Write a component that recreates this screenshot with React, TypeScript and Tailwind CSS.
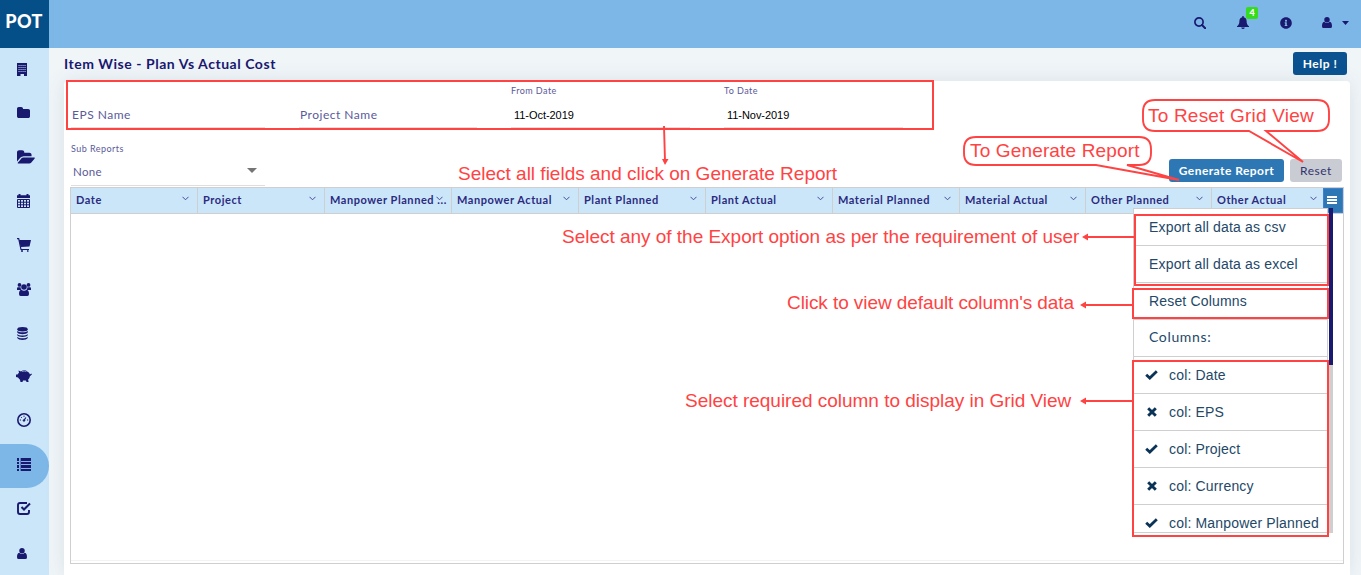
import React from 'react';
import { FaInfoCircle } from 'react-icons/fa';

const CalendarIcon = () => (
  <svg width="13" height="14" viewBox="0 0 13 14" fill="none" stroke="#191970">
    <path d="M0 4V1.200h1.500V0h2v1.200h6V0h2v1.200H13V4z" fill="#191970" stroke="none" />
    <path d="M.5 5.500h12v8H.5zM.5 8.200h12M.5 10.800h12M3.500 5v8.500M6.500 5v8.500M9.500 5v8.500" />
  </svg>
);

const BuildingIcon = () => (
  <svg className="mt-px" width="10" height="13" viewBox="0 0 10 13">
    <path d="M0 0h10v13H7v-2H3.500v2H0z" fill="#191970" />
    <path d="M1.500 2.500h7.500M1.500 4.500h7.500M1.500 6.500h7.500M1.500 8.500h7.500" stroke="#b9cdf0" strokeDasharray="1.100 .9" strokeWidth="1" />
  </svg>
);

const FolderIcon = () => (
  <svg width="14" height="14" viewBox="64 0 1792 1792" fill="#191970">
    <path d="M1728 608v704q0 92-66 158t-158 66h-1216q-92 0-158-66t-66-158v-960q0-92 66-158t158-66h320q92 0 158 66t66 158v32h672q92 0 158 66t66 158z" />
  </svg>
);

const FolderOpenIcon = () => (
  <svg className="mt-px" width="18" height="17" viewBox="0 0 1900 1792" fill="#191970">
    <path d="M1879 952q0 31-31 66l-336 396q-43 51-120.500 86.500t-143.500 35.500h-1088q-34 0-60.500-13t-26.500-43q0-31 31-66l336-396q43-51 120.500-86.500t143.500-35.500h1088q34 0 60.500 13t26.500 43zm-343-344v160h-832q-94 0-197 47.500t-164 119.500l-337 396-5 6q0-4-.5-12.500t-.5-12.500v-960q0-92 66-158t158-66h320q92 0 158 66t66 158v32h544q92 0 158 66t66 158z" />
  </svg>
);

const CartIcon = () => (
  <svg width="14" height="14" viewBox="0 0 14 14" fill="none" stroke="#191970">
    <path d="M2 2h12l-1.500 6.500L3.700 9z" fill="#191970" stroke="none" />
    <path d="M0 .700h1.700L4 11.500h8" strokeWidth="1.200" />
    <path d="M4 13h2M10 13h1.500" strokeWidth="1.600" />
  </svg>
);

const UsersIcon = () => (
  <svg className="mt-px" width="14" height="13" viewBox="0 0 14 13" fill="#191970">
    <circle cx="2.500" cy="1.900" r="1.900" />
    <circle cx="11.500" cy="1.900" r="1.900" />
    <circle cx="7" cy="4" r="2.800" />
    <path d="M0 7V5.500Q0 4 1.200 4.200H3.600Q3.600 6 4.500 7zM14 7V5.500Q14 4 12.800 4.200H10.400Q10.400 6 9.500 7z" />
    <path d="M4.300 6.700Q7 9 9.700 6.700C11.500 7 12 9 12 11Q12 13 10.400 13H3.600Q2 13 2 11C2 9 2.500 7 4.300 6.700z" />
  </svg>
);

const DatabaseIcon = () => (
  <svg className="mt-px" width="11" height="13" viewBox="0 0 12 13" fill="#191970" preserveAspectRatio="none">
    <ellipse cx="6" cy="2.200" rx="5.700" ry="2.200" />
    <path d="M.3 3.800C2 5.800 10 5.800 11.700 3.800V5.500C10.500 7.700 1.500 7.700.3 5.500zM.3 6.900C2 8.900 10 8.900 11.700 6.900V8.300C10.500 10.500 1.500 10.500.3 8.300zM.3 9.700C2 11.700 10 11.700 11.700 9.700V11C10.500 13.500 1.500 13.500.3 11z" />
  </svg>
);

const PiggyIcon = () => (
  <svg width="16" height="13" viewBox="0 0 16 13" fill="#191970">
    <path d="M5 1.600C7-.2 10-.2 11.500 1.800c1.500.7 2.200 1.800 2.400 2.800L15.300 3.500l.6 1-2 1.700c-.2 1.600-1 2.600-1.800 3.200L12.600 12h-2l-.8-1.500H7L6.500 12h-2L4 9.700C3 9 2.500 8.200 2 7.500L0 7V4.500h1.500C2 3.500 2.500 3 3 2.700L2.500.6z" />
    <path d="M6 1.500Q8.200.6 10.500 1.600" fill="none" stroke="#cbe6f9" strokeWidth=".6" />
  </svg>
);

const GaugeIcon = () => (
  <svg className="-mt-px" width="14" height="14" viewBox="0 0 14 14" fill="none" stroke="#191970">
    <circle cx="7" cy="7" r="6.200" strokeWidth="1.600" />
    <path d="M7 7.500 8.800 4.500" strokeWidth="1.200" />
    <circle cx="7" cy="7.500" r=".8" fill="#191970" />
    <path d="M2.800 7h1.200M10 7h1.200M4 4l.8.800M7 2.600v1.200" strokeWidth="1" />
  </svg>
);

const ListIcon = () => (
  <svg width="14" height="13" viewBox="0 0 14 13" fill="#191970">
    <path d="M0 0h2v3H0zM0 4h2v2H0zM0 7h2v3H0zM0 11h2v2H0zM4 0H14v3H4zM4 4H14v2H4zM4 7H14v3H4zM4 11H14v2H4z" />
    <path d="M3 0h1v13H3z" opacity=".35" />
  </svg>
);

const CheckSquareIcon = () => (
  <svg width="14" height="13" viewBox="0 0 14 13" fill="none" stroke="#191970">
    <path d="M10 1H3Q1 1 1 3v7q0 2 2 2h7q2 0 2-2V8" strokeWidth="1.900" />
    <path d="M4.500 5 7 7.500l6-6" strokeWidth="2.100" />
  </svg>
);

const PersonIcon = ({ className = '' }: { className?: string }) => (
  <svg className={className} width="10" height="11" viewBox="0 0 11 12" fill="#191970" preserveAspectRatio="none">
    <circle cx="5.500" cy="3" r="3" />
    <path d="M2.500 5.200Q5.500 8 8.500 5.200C10.500 5.500 11 8 11 10q0 2-1.800 2H1.800Q0 12 0 10C0 8 .5 5.500 2.500 5.200z" />
  </svg>
);

const SearchIcon = () => (
  <svg width="12" height="12" viewBox="0 0 12 12" fill="none" stroke="#191970">
    <circle cx="5" cy="5" r="4.100" strokeWidth="1.700" />
    <path d="M8 8l3.200 3.200" strokeWidth="2" strokeLinecap="round" />
  </svg>
);

const BellIcon = () => (
  <svg width="12" height="13" viewBox="0 0 12 13" fill="#191970">
    <path d="M5.300 0h1.400v1.200C8.700 1.600 9.600 3 9.600 5c0 3 .9 4.200 2.400 5.300v.7H0v-.7C1.500 9.200 2.400 8 2.400 5c0-2 .9-3.400 2.900-3.800zM4.200 11.400h3.600Q7.500 13 6 13T4.200 11.400z" />
  </svg>
);

const CheckIcon = () => (
  <svg width="13" height="10" viewBox="0 0 13 10" fill="none" stroke="#0b3358" strokeWidth="2.800">
    <path d="M1.200 4.700 4.800 8.100 11.800 1.300" />
  </svg>
);

const CrossIcon = () => (
  <svg width="10" height="10" viewBox="0 0 10 10" fill="none" stroke="#0b3358" strokeWidth="2.900">
    <path d="M1.200 1.200l7.600 7.600M8.800 1.200 1.200 8.800" />
  </svg>
);

const navItems = [
  <BuildingIcon />, <FolderIcon />, <FolderOpenIcon />, <CalendarIcon />,
  <CartIcon />, <UsersIcon />, <DatabaseIcon />, <PiggyIcon />,
  <GaugeIcon />, <ListIcon />, <CheckSquareIcon />, <PersonIcon className="mt-px" />,
];

const columns = [
  { name: 'Date', width: 'w-[127px]' },
  { name: 'Project', width: 'w-[127px]' },
  { name: 'Manpower Planned ...', width: 'w-[127px]' },
  { name: 'Manpower Actual', width: 'w-[127px]' },
  { name: 'Plant Planned', width: 'w-[127px]' },
  { name: 'Plant Actual', width: 'w-[127px]' },
  { name: 'Material Planned', width: 'w-[127px]' },
  { name: 'Material Actual', width: 'w-[126px]' },
  { name: 'Other Planned', width: 'w-[126px]' },
  { name: 'Other Actual', width: 'w-[111px]' },
];

const menuColumns = [
  { name: 'Date', on: true },
  { name: 'EPS', on: false },
  { name: 'Project', on: true },
  { name: 'Currency', on: false },
  { name: 'Manpower Planned', on: true },
];

const Chevron = () => (
  <svg className="shrink-0" width="7" height="5" viewBox="0 0 7 5" fill="none" stroke="#4a4a9a">
    <path d="M.5.800 3.500 3.800 6.500.800" />
  </svg>
);

function Header() {
  return (
    <header className="flex h-12 bg-[#7db7e8]">
      <div className="flex w-[49px] justify-center bg-[#044f88] pt-[8px] pr-px text-[18px] leading-[27px] font-black tracking-[0.3px] text-white">POT</div>
      <div className="flex flex-1 items-center justify-end pr-[12px] pb-[3px] text-[#191970]">
        <div className="mr-[31px]"><SearchIcon /></div>
        <div className="relative mr-[31px]">
          <BellIcon />
          <span className="absolute -top-[9px] left-[9px] flex h-[12px] w-[12px] items-center justify-center rounded-[2px] bg-[#35dc1c] pb-px text-[9px] font-black text-white">4</span>
        </div>
        <FaInfoCircle size={12} className="mr-[30px]" />
        <PersonIcon className="mr-[10px]" />
        <svg width="7" height="4" viewBox="0 0 7 4" fill="#191970"><path d="M0 0h7L3.500 4z" /></svg>
      </div>
    </header>
  );
}

function Sidebar() {
  return (
    <nav className="flex w-[49px] shrink-0 flex-col bg-[#cbe6f9] text-[#191970]">
      {navItems.map((icon, i) => (
        <div key={i} className={`flex h-11 shrink-0 items-center pb-[3px] ${i === 9 ? 'rounded-r-[22px] bg-[#7db7e8]' : ''} ${i === 7 ? 'pl-[16px]' : 'pl-[17px]'}`}>
          {icon}
        </div>
      ))}
    </nav>
  );
}

function Filters() {
  return (
    <div className="flex gap-[34px] pl-[7px] text-[12px] tracking-[0.500px] text-[#5a5a9a]">
      <div className="flex h-[47px] w-[194px] items-end border-b border-[#dedede] pb-[4px] pl-px leading-4">EPS Name</div>
      <div className="flex h-[47px] w-[178px] items-end border-b border-[#dedede] pb-[4px] pl-px leading-4">Project Name</div>
      {[['From Date', '11-Oct-2019'], ['To Date', '11-Nov-2019']].map(([label, value]) => (
        <div key={label} className="flex h-[47px] w-[179px] flex-col border-b border-[#dedede] pt-[4px]">
          <span className="text-[9px] leading-[12px] tracking-[0.45px]">{label}</span>
          <span className="mt-[11px] pl-[3px] font-['Liberation_Sans',sans-serif] text-[11px] leading-[14px] tracking-[-0.05px] text-black">{value}</span>
        </div>
      ))}
    </div>
  );
}

function Grid() {
  return (
    <div className="ml-[6px] flex h-[377px] w-[1274px] flex-col border border-[#cfcfcf]">
      <div className="flex h-[26px] border-b border-[#cfcfcf] bg-[#cbe6f9]">
        {columns.map((c, i) => (
          <div key={c.name} className={`relative flex shrink-0 items-center ${i < 9 ? 'border-r border-[#cfcfcf]' : ''} pl-[5px] text-[11px] font-bold tracking-[0.55px] text-[#2b2b80] ${c.width}`}>
            <span className="whitespace-nowrap">{c.name}</span>
            <span className={`absolute top-[8px] ${i === 9 ? 'right-[6px]' : 'right-[8px]'}`}><Chevron /></span>
          </div>
        ))}
        <button className="flex h-[25px] w-[20px] items-center justify-center bg-[#2d78b4] outline-1 -outline-offset-1 outline-[#3b82d6]">
          <svg className="mr-[2px] mb-px" width="10" height="8" viewBox="0 0 10 8" fill="#fff"><path d="M0 0h10v2H0zM0 3h10v2H0zM0 6h10v2H0z" /></svg>
        </button>
      </div>
      <div className="mt-auto mb-[2px] h-px bg-[#f3f3f3]" />
    </div>
  );
}

function ColumnMenu() {
  const row = 'flex h-[37px] shrink-0 items-center border-b border-[#cfcfcf] text-[14px] text-[#234868]';
  return (
    <div className="absolute top-[208px] left-[1133px] flex h-[325px] w-[200px] font-['Liberation_Sans',sans-serif]">
      <div className="flex w-[195px] flex-col overflow-hidden border border-[#cfcfcf] bg-white tracking-[0.17px]">
        <div className={`${row} pl-[15px]`}>Export all data as csv</div>
        <div className={`${row} pl-[15px]`}>Export all data as excel</div>
        <div className={`${row} pl-[15px]`}>Reset Columns</div>
        <div className={`${row} pb-[3px] pl-[15px] font-['Lato',sans-serif] tracking-[0.65px]`}>Columns:</div>
        {menuColumns.map((c) => (
          <div key={c.name} className={`${row} pl-[11px]`}>
            <span className={`flex w-[24px] items-center ${c.on ? '' : 'pl-[2px]'}`}>{c.on ? <CheckIcon /> : <CrossIcon />}</span>
            <span className="whitespace-nowrap">col: {c.name}</span>
          </div>
        ))}
      </div>
      <div className="ml-[1px] w-[4px] bg-[#cfcfcf]"><div className="h-[157px] bg-[#191970]" /></div>
    </div>
  );
}

function Annotations() {
  const note = 'absolute whitespace-nowrap leading-[22px]';
  return (
    <div className="pointer-events-none absolute inset-0 font-['Liberation_Sans',sans-serif] text-[19px] text-[#ff4343]">
      <svg className="absolute inset-0" width="1361" height="575" fill="none" stroke="#ff4343" strokeWidth="2">
        <rect x="67" y="81" width="866" height="48" />
        <rect x="1135" y="215" width="193" height="70" />
        <rect x="1133" y="289" width="195" height="29" />
        <rect x="1133" y="361" width="195" height="175" />
        <path d="M664 126 665 161M1134 237H1087M1132 305H1084M1132 401H1084" strokeWidth="1.900" />
        <path d="M662 159h6.500l-3.500 6zM1088 233.500v7l-6-3.500zM1086 301.500v7l-6-3.500zM1086 397.500v7l-6-3.500z" fill="#ff4343" stroke="none" />
        <path d="M976 137H1139Q1151 137 1151 149V153Q1151 165 1139 165H1127L1179 180 1096 165H976Q964 165 964 153V149Q964 137 976 137z" fill="#fff" strokeWidth="1.900" />
        <path d="M1155 100H1317Q1329 100 1329 112V119Q1329 131 1317 131H1266L1303 162 1249 131H1155Q1143 131 1143 119V112Q1143 100 1155 100z" fill="#fff" strokeWidth="1.900" />
      </svg>
      <span className={`${note} top-[163px] left-[458px]`}>Select all fields and click on Generate Report</span>
      <span className={`${note} top-[226px] left-[562px] tracking-[-0.02px]`}>Select any of the Export option as per the requirement of user</span>
      <span className={`${note} top-[292px] left-[787px] tracking-[-0.08px]`}>Click to view default column's data</span>
      <span className={`${note} top-[390px] left-[685px] tracking-[-0.02px]`}>Select required column to display in Grid View</span>
      <span className={`${note} top-[140px] left-[970px] tracking-[0.15px]`}>To Generate Report</span>
      <span className={`${note} top-[105px] left-[1148px] tracking-[0.2px]`}>To Reset Grid View</span>
    </div>
  );
}

export default function App() {
  return (
    <div className="relative flex h-[575px] w-[1361px] flex-col overflow-hidden bg-[#f0f5f8] font-['Lato',sans-serif]">
      <Header />
      <div className="flex min-h-0 flex-1">
        <Sidebar />
        <main className="flex flex-1 flex-col pr-[11px] pl-[15px]">
          <div className="flex h-[33px] shrink-0 justify-between pt-[4px] pr-[3px]">
            <h1 className="pt-[2px] text-[14px] leading-[20px] font-bold tracking-[0.54px] text-[#191970]">Item Wise - Plan Vs Actual Cost</h1>
            <button className="h-[23px] w-[54px] rounded-[3px] bg-[#0a5290] text-[12px] font-bold tracking-[0.5px] text-white">Help !</button>
          </div>
          <section className="flex-1 rounded-t-[4px] bg-white shadow-[0_0_20px_rgba(60,90,110,0.12)]">
            <Filters />
            <div className="flex h-[59px] justify-between pr-[8px] pl-[7px] tracking-[0.5px] text-[#5a5a9a]">
              <div className="flex h-[58px] w-[194px] flex-col border-b border-[#dedede] pt-[15px]">
                <span className="text-[9px] leading-[12px] tracking-[0.45px]">Sub Reports</span>
                <span className="mt-[9px] flex items-center justify-between pr-[8px] pl-[2px] text-[11.500px] leading-[16px] tracking-[0.3px]">
                  None
                  <svg className="mt-[-3px]" width="10" height="5" viewBox="0 0 10 5" fill="#757575"><path d="M0 0h10L5 5z" /></svg>
                </span>
              </div>
              <div className="flex gap-[6px] pt-[31px] text-[12px]">
                <button className="h-[23px] w-[115px] rounded-[3px] bg-[#2d78b4] font-bold tracking-[0.45px] whitespace-nowrap text-white">Generate Report</button>
                <button className="h-[23px] w-[52px] rounded-[3px] bg-[#c9cdd3] text-[#33336f]">Reset</button>
              </div>
            </div>
            <Grid />
          </section>
        </main>
      </div>
      <ColumnMenu />
      <Annotations />
    </div>
  );
}
